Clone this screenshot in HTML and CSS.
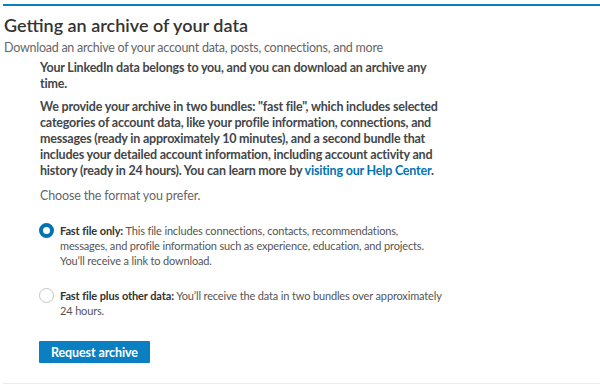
FILE: index.html
```html
<!DOCTYPE html>
<html>
<head>
<meta charset="utf-8">
<link rel="stylesheet" href="styles.css">
</head>
<body>
<section class="card">
  <header class="card-head">
    <h2 class="title">Getting an archive of your data</h2>
    <p class="subtitle">Download an archive of your account data, posts, connections, and more</p>
  </header>
  <div class="body">
    <p class="lead">Your LinkedIn data belongs to you, and you can download an archive any time.</p>
    <p class="lead">We provide your archive in two bundles: "fast file", which includes selected categories of account data, like your profile information, connections, and messages (ready in approximately 10 minutes), and a second bundle that includes your detailed account information, including account activity and history (ready in 24 hours). You can learn more by <a class="link" href="#">visiting our Help Center</a>.</p>
    <p class="choose">Choose the format you prefer.</p>
    <ul class="options">
      <li class="option">
        <span class="radio radio-on"></span>
        <p class="opt-text"><b>Fast file only:</b> This file includes connections, contacts, recommendations,<br>messages, and profile information such as experience, education, and projects.<br>You’ll receive a link to download.</p>
      </li>
      <li class="option">
        <span class="radio"></span>
        <p class="opt-text"><b>Fast file plus other data:</b> You’ll receive the data in two bundles over approximately<br>24 hours.</p>
      </li>
    </ul>
    <button class="btn" type="button">Request archive</button>
  </div>
</section>
</body>
</html>
```

FILE: styles.css
```css
html, body {
  margin: 0;
  padding: 0;
  background: #fff;
}
body {
  font-family: Lato, "Noto Sans", sans-serif;
  color: #333;
  padding: 4px 0 0 3px;
}
.card {
  border-top: 2px solid #0a7fc2;
  border-bottom: 1px solid #ececec;
  height: 380px;
  box-sizing: border-box;
}
.card-head {
  padding: 8px 0 0 1px;
}
.title {
  margin: 0;
  font-size: 18px;
  font-weight: 600;
  line-height: 22px;
  color: #333;
}
.subtitle {
  margin: 3px 0 0;
  font-size: 12.5px;
  letter-spacing: -0.25px;
  line-height: 18px;
  color: #666;
}
.body {
  padding: 3px 0 0 37px;
  width: 404px;
}
.lead {
  margin: 0 0 7px;
  font-size: 12.5px;
  letter-spacing: -0.2px;
  line-height: 16px;
  font-weight: 700;
  color: #434649;
}
.link {
  color: #0073b1;
  text-decoration: none;
}
.choose {
  margin: 8px 0 0;
  font-size: 12.5px;
  letter-spacing: -0.15px;
  line-height: 18px;
  color: #666;
}
.options {
  list-style: none;
  margin: 18px 0 0;
  padding: 0;
  width: 440px;
}
.option {
  display: flex;
  gap: 6px;
  margin-bottom: 20px;
}
.radio {
  flex: none;
  width: 15px;
  height: 15px;
  border: 1px solid #c7c7c7;
  border-radius: 50%;
  box-sizing: border-box;
  margin: 0 0 0 -1px;
}
.radio-on {
  border: 4px solid #0073b1;
}
.opt-text {
  margin: 0;
  font-size: 11px;
  letter-spacing: -0.15px;
  line-height: 15px;
  color: #555;
}
.opt-text b {
  font-weight: 700;
  color: #333;
  letter-spacing: -0.1px;
}
.btn {
  display: block;
  margin: 23px 0 0 -1px;
  background: #0a7fc2;
  border: none;
  color: #fff;
  font-family: inherit;
  font-size: 12.5px;
  letter-spacing: -0.1px;
  font-weight: 700;
  padding: 0 12px;
  height: 22px;
  border-radius: 1px;
}
```
